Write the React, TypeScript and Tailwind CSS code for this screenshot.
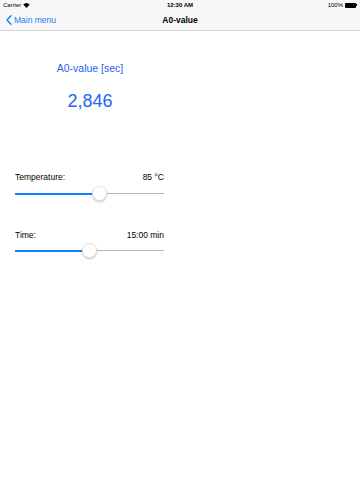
import React from 'react';

const font = { fontFamily: '"Liberation Sans", Arial, sans-serif' };

const Slider = ({ value }: { value: number }) => (
  <div className="relative h-[16px]">
    <div className="absolute left-0 right-0 top-[7px] h-[1px] bg-[#b7b7b7]" />
    <div className="absolute left-0 top-[7px] h-[1.5px] bg-[#157efb]" style={{ width: `${value}%` }} />
    <div
      className="absolute top-[0px] w-[15px] h-[15px] rounded-full bg-white border border-[#e6e6e6] shadow-[0_1px_2px_rgba(0,0,0,0.25)]"
      style={{ left: `calc(${value}% - 7.5px)` }}
    />
  </div>
);

export default function App() {
  return (
    <div className="w-[360px] h-[480px] bg-white text-black" style={font}>
      <div className="bg-[#f7f7f7] border-b border-[#d8d8d8]">
        <div className="h-[10px] flex items-center justify-between px-[3px] text-[6px] relative">
          <div className="flex items-center gap-[2px]">
            <span>Carrier</span>
            <svg width="7" height="5" viewBox="0 0 14 10">
              <path d="M7 10 L0.5 3.2 A9.5 9.5 0 0 1 13.5 3.2 Z" fill="#000" />
            </svg>
          </div>
          <span className="absolute left-1/2 -translate-x-1/2 font-semibold">12:30 AM</span>
          <div className="flex items-center gap-[2px]">
            <span>100%</span>
            <div className="flex items-center">
              <div className="w-[11px] h-[5px] bg-black rounded-[1px]" />
              <div className="w-[1px] h-[2px] bg-black" />
            </div>
          </div>
        </div>
        <div className="h-[20px] flex items-center relative">
          <div className="flex items-center text-[#157efb] text-[8.5px] pl-[6px] gap-[2px]">
            <svg width="6" height="10" viewBox="0 0 6 10">
              <path d="M5 0.8 L1 5 L5 9.2" stroke="#157efb" strokeWidth="1.4" fill="none" strokeLinecap="round" strokeLinejoin="round" />
            </svg>
            <span>Main menu</span>
          </div>
          <span className="absolute left-1/2 -translate-x-1/2 text-[8.5px] font-semibold">A0-value</span>
        </div>
      </div>

      <div className="w-[180px]">
        <div className="flex flex-col items-center pt-[31px] text-[#2563f2]">
          <span className="text-[10.5px] leading-[12px]">A0-value [sec]</span>
          <span className="text-[18px] leading-[20px] mt-[17px]">2,846</span>
        </div>

        <div className="pl-[15px] pr-[16px] pt-[61px] text-[8.5px]">
          <div className="flex justify-between leading-[10px]">
            <span>Temperature:</span>
            <span>85 °C</span>
          </div>
          <div className="mt-[4px]">
            <Slider value={56.5} />
          </div>
          <div className="flex justify-between leading-[10px] mt-[28px]">
            <span>Time:</span>
            <span>15:00 min</span>
          </div>
          <div className="mt-[3px]">
            <Slider value={50} />
          </div>
        </div>
      </div>
    </div>
  );
}
